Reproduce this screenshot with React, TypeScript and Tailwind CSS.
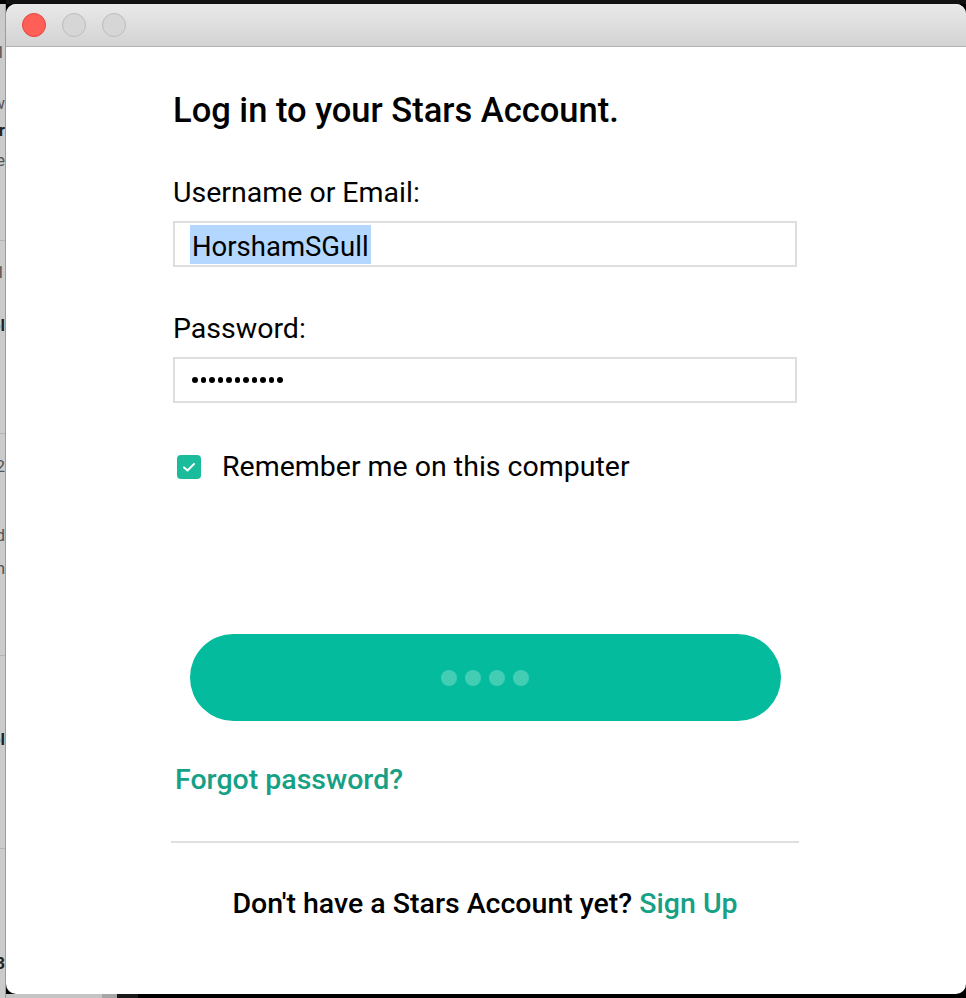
import React from "react";

function Glyph({ mt, ch, bold }: { mt: string; ch: string; bold?: boolean }) {
  return (
    <div className={`${mt} h-[20px] flex justify-end overflow-hidden whitespace-nowrap text-[17px] leading-[20px] ${bold ? "font-bold text-[#222]" : "text-[#555]"}`}>
      <span>{ch}</span>
    </div>
  );
}

function Dots() {
  return (
    <div className="flex items-center gap-[3px]">
      {Array.from({ length: 11 }).map((_, i) => (
        <div key={i} className="w-[5.5px] h-[5.5px] rounded-full bg-black" />
      ))}
    </div>
  );
}

export default function App() {
  return (
    <div
      className="w-[966px] h-[998px] bg-black overflow-hidden flex"
      style={{ fontFamily: "Roboto, 'Noto Sans', Arial, sans-serif" }}
    >
      {/* background window sliver */}
      <div className="w-[6px] mt-[4px] h-[994px] bg-[#cbcbcb] border-r border-[#9c9c9c] flex flex-col overflow-hidden">
        <div className="h-[236px] flex flex-col">
          <Glyph mt="mt-[38px]" ch="1" />
          <Glyph mt="mt-[31px]" ch="w" />
          <Glyph mt="mt-[7px]" ch="r" bold />
          <Glyph mt="mt-[10px]" ch="e" />
        </div>
        <div className="h-px bg-[#b3b3b3]" />
        <div className="h-[192px] flex flex-col">
          <Glyph mt="mt-[21px]" ch="1" />
          <Glyph mt="mt-[33px]" ch="ol" bold />
        </div>
        <div className="h-px bg-[#b3b3b3]" />
        <div className="h-[221px] flex flex-col">
          <Glyph mt="mt-[22px]" ch="2" />
          <Glyph mt="mt-[49px]" ch="d" />
          <Glyph mt="mt-[13px]" ch="h" />
        </div>
        <div className="h-px bg-[#b3b3b3]" />
        <div className="h-[192px] flex flex-col">
          <Glyph mt="mt-[73px]" ch="ol" bold />
        </div>
        <div className="h-px bg-[#b3b3b3]" />
        <div className="flex-1 flex flex-col">
          <Glyph mt="mt-[104px]" ch="3" bold />
        </div>
      </div>

      {/* main column */}
      <div className="flex flex-col w-[960px]">
        <div className="h-[4px] bg-[#111]" />
        <div className="h-[990px] bg-white rounded-[10px] overflow-hidden flex flex-col">
          {/* title bar */}
          <div className="h-[43px] bg-gradient-to-b from-[#e9e9e9] to-[#d3d3d3] border-b border-[#b3b3b3] flex items-center pl-[16px] gap-[16px]">
            <div className="w-[24px] h-[24px] rounded-full bg-[#fe5f57] border border-[#e2463f]" />
            <div className="w-[24px] h-[24px] rounded-full bg-[#d6d6d6] border border-[#bcbcbc]" />
            <div className="w-[24px] h-[24px] rounded-full bg-[#d6d6d6] border border-[#bcbcbc]" />
          </div>

          {/* content */}
          <div className="w-[624px] ml-[167px] flex flex-col text-black">
            <h1 className="mt-[46px] text-[34.5px] leading-[34px] font-medium whitespace-nowrap">
              Log in to your Stars Account.
            </h1>

            <div className="mt-[52px] text-[28.5px] leading-[28px] whitespace-nowrap">Username or Email:</div>
            <div className="mt-[14px] h-[46px] border-2 border-[#dedede] flex items-center pl-[15px]">
              <span className="inline-block h-[39px] pt-[4px] leading-[36px] text-[27.5px] bg-[#b3d7ff] pl-[2px] pr-[2px] whitespace-nowrap">
                HorshamSGull
              </span>
            </div>

            <div className="mt-[48px] text-[28.5px] leading-[28px] whitespace-nowrap">Password:</div>
            <div className="mt-[14px] h-[46px] border-2 border-[#dedede] flex items-center pl-[17px]">
              <Dots />
            </div>

            <div className="mt-[52px] flex items-center h-[24px]">
              <div className="ml-[4px] w-[24px] h-[24px] rounded-[4px] bg-[#1abc9c] flex items-center justify-center shrink-0">
                <svg width="24" height="24" viewBox="0 0 24 24" fill="none">
                  <path d="M7 12.5 L10.5 15.5 L17 9" stroke="white" strokeWidth="2" strokeLinecap="round" strokeLinejoin="round" />
                </svg>
              </div>
              <span className="ml-[21px] text-[28.5px] leading-[28px] whitespace-nowrap">Remember me on this computer</span>
            </div>

            <div className="mt-[155px] mx-auto w-[591px] h-[87px] rounded-full bg-[#04bc9d] flex items-center justify-center gap-[8px]">
              <div className="w-[16px] h-[16px] rounded-full bg-white/25" />
              <div className="w-[16px] h-[16px] rounded-full bg-white/25" />
              <div className="w-[16px] h-[16px] rounded-full bg-white/25" />
              <div className="w-[16px] h-[16px] rounded-full bg-white/25" />
            </div>

            <div className="mt-[45px] ml-[2px] text-[28.5px] leading-[28px] font-medium text-[#16a085] whitespace-nowrap">
              Forgot password?
            </div>

            <div className="mt-[47px] -mx-[2px] h-[2px] bg-[#e0e0e0]" />

            <div className="mt-[47px] text-center text-[28.5px] leading-[28px] font-medium whitespace-nowrap">
              Don't have a Stars Account yet? <span className="text-[#16a085]">Sign Up</span>
            </div>
          </div>
        </div>
        <div className="h-[4px] flex">
          <div className="w-[96px] bg-[#c4c4c4]" />
          <div className="w-[15px] bg-[#a6a6a6]" />
          <div className="w-[21px] bg-[#1a1a1a]" />
          <div className="flex-1 bg-black" />
        </div>
      </div>
    </div>
  );
}
